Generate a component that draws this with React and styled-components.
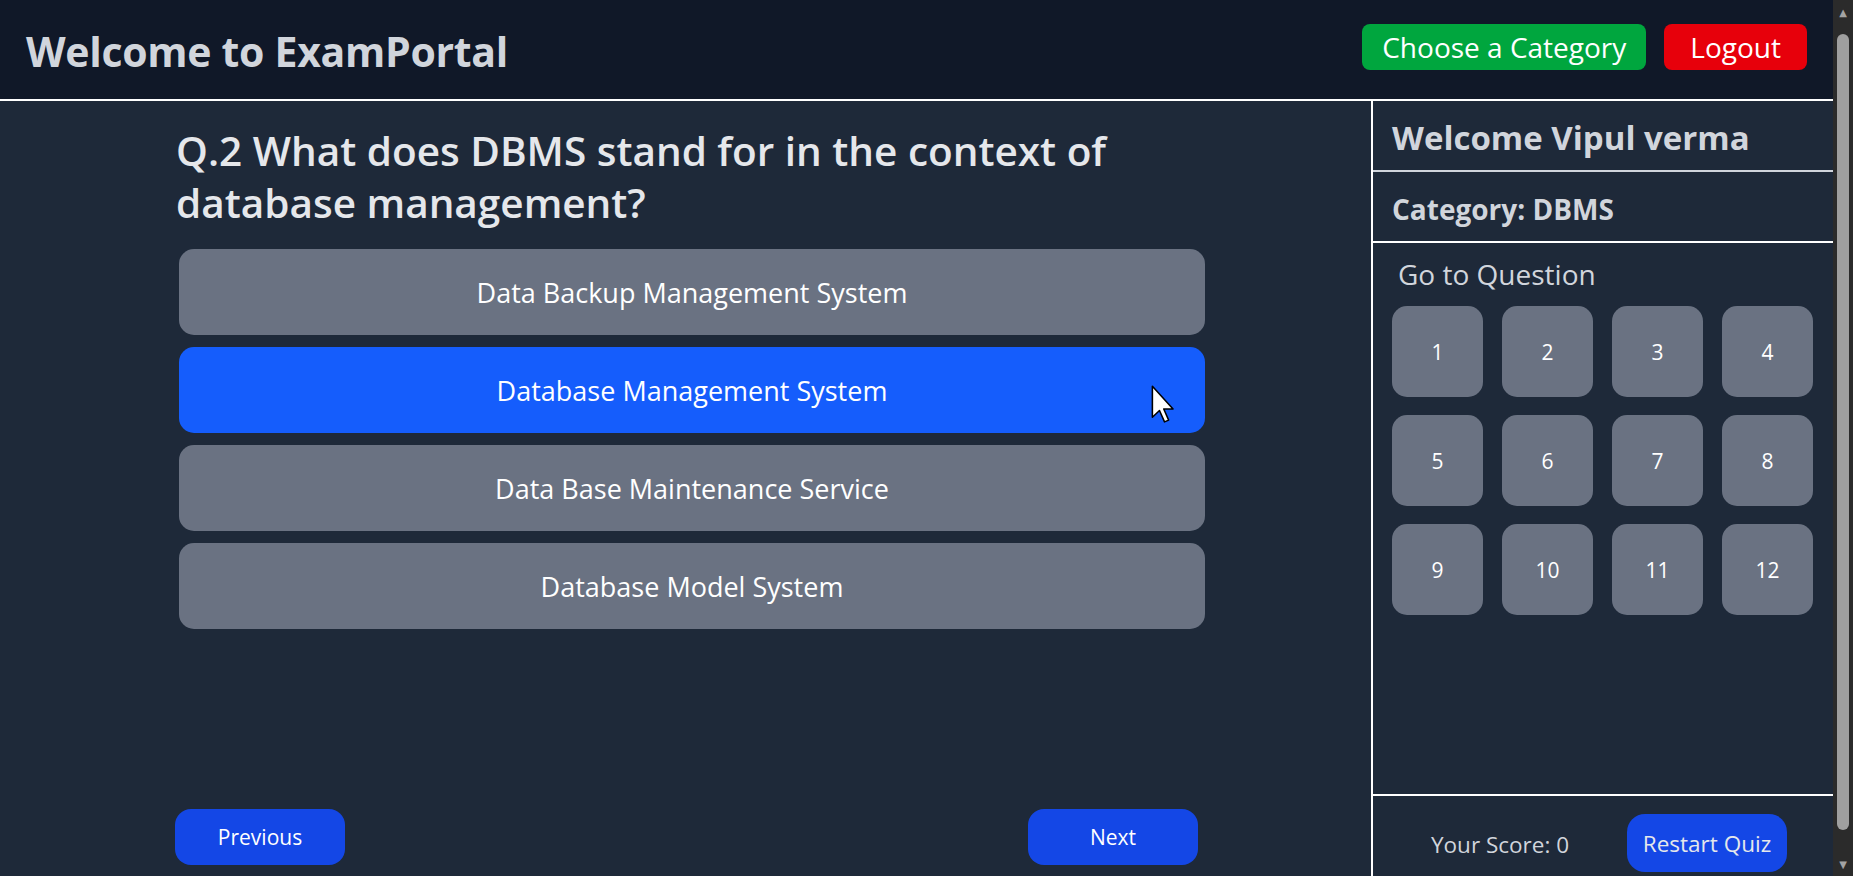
import React, { useState } from "react";
import styled, { createGlobalStyle } from "styled-components";

const GlobalStyle = createGlobalStyle`
  body {
    margin: 0;
    background: #1e2939;
    font-family: "Open Sans", "Noto Sans", sans-serif;
    color: #d1d5dc;
  }
  * {
    box-sizing: border-box;
  }
`;

const options = [
  "Data Backup Management System",
  "Database Management System",
  "Data Base Maintenance Service",
  "Database Model System",
];

const Cursor = () => (
  <CursorMark width="26" height="40" viewBox="0 0 20 31">
    <path
      d="M1 1 L1 25 L6.5 19.8 L10.4 28.6 L13.6 27.2 L9.8 18.6 L17 18.6 Z"
      fill="#fff"
      stroke="#000"
      strokeWidth="1.2"
      strokeLinejoin="round"
    />
  </CursorMark>
);

const App = () => {
  const [selected, setSelected] = useState(1);

  return (
    <Page>
      <GlobalStyle />
      <Header>
        <Brand>Welcome to ExamPortal</Brand>
        <HeaderActions>
          <HeaderButton $bg="#00a63e" $padX={20}>
            Choose a Category
          </HeaderButton>
          <HeaderButton $bg="#e7000b" $padX={26}>
            Logout
          </HeaderButton>
        </HeaderActions>
      </Header>

      <Main>
        <QuizArea>
          <QuizInner>
            <Question>
              Q.2 What does DBMS stand for in the context of database
              management?
            </Question>
            <OptionList>
              {options.map((opt, i) => (
                <Option
                  key={opt}
                  $active={i === selected}
                  onClick={() => setSelected(i)}
                >
                  {opt}
                  {i === selected && <Cursor />}
                </Option>
              ))}
            </OptionList>
            <NavRow>
              <NavButton>Previous</NavButton>
              <NavButton>Next</NavButton>
            </NavRow>
          </QuizInner>
        </QuizArea>

        <Sidebar>
          <SideBlock $line="#d1d5dc" $top={3}>
            <UserName>Welcome Vipul verma</UserName>
          </SideBlock>
          <SideBlock $line="#ffffff" $top={5}>
            <CategoryLabel>Category: DBMS</CategoryLabel>
          </SideBlock>
          <Navigator>
            <NavigatorTitle>Go to Question</NavigatorTitle>
            <QuestionGrid>
              {Array.from({ length: 12 }, (_, i) => (
                <QuestionTile key={i}>{i + 1}</QuestionTile>
              ))}
            </QuestionGrid>
          </Navigator>
          <ScoreBar>
            <Score>Your Score: 0</Score>
            <RestartButton>Restart Quiz</RestartButton>
          </ScoreBar>
        </Sidebar>
      </Main>

      <ScrollTrack>
        <ScrollArrow>▲</ScrollArrow>
        <ScrollThumb />
        <ScrollArrow>▼</ScrollArrow>
      </ScrollTrack>
    </Page>
  );
};

export default App;

// Styled Components
const Page = styled.div`
  margin-right: 20px;
`;

const Header = styled.header`
  display: flex;
  align-items: center;
  justify-content: space-between;
  height: 101px;
  padding: 2px 26px 0 26px;
  background: #101828;
  border-bottom: 2px solid #ffffff;
`;

const Brand = styled.h1`
  margin: 0;
  font-size: 41px;
  font-weight: 700;
  color: #d1d5dc;
  letter-spacing: -0.3px;
`;

const HeaderActions = styled.div`
  display: flex;
  gap: 18px;
  margin-top: -7px;
`;

const HeaderButton = styled.button`
  height: 46px;
  padding: 0 ${(p) => p.$padX}px;
  border: none;
  border-radius: 8px;
  background: ${(p) => p.$bg};
  color: #ffffff;
  font-family: inherit;
  font-size: 28px;
  cursor: pointer;
`;

const Main = styled.main`
  display: flex;
  height: 792px;
`;

const QuizArea = styled.section`
  flex: 1;
  display: flex;
  padding: 24px 0 28px 175px;
`;

const QuizInner = styled.div`
  width: 1030px;
  display: flex;
  flex-direction: column;
`;

const Question = styled.h2`
  margin: 0 0 20px 1px;
  font-size: 40.5px;
  line-height: 52px;
  font-weight: 600;
  color: #e5e7eb;
`;

const OptionList = styled.div`
  display: flex;
  flex-direction: column;
  gap: 12px;
  padding-left: 4px;
`;

const Option = styled.button`
  position: relative;
  height: 86px;
  border: none;
  border-radius: 15px;
  background: ${(p) => (p.$active ? "#155dfc" : "#6a7282")};
  color: #ffffff;
  font-family: inherit;
  font-size: 27px;
  cursor: pointer;
`;

const CursorMark = styled.svg`
  position: absolute;
  top: 38px;
  right: 28px;
`;

const NavRow = styled.div`
  display: flex;
  justify-content: space-between;
  margin-top: auto;
  padding-right: 7px;
`;

const NavButton = styled.button`
  width: 170px;
  height: 56px;
  border: none;
  border-radius: 16px;
  background: #1447e6;
  color: #ffffff;
  font-family: inherit;
  font-size: 21px;
  cursor: pointer;
`;

const Sidebar = styled.aside`
  width: 462px;
  flex-shrink: 0;
  display: flex;
  flex-direction: column;
  border-left: 2px solid #ffffff;
`;

const SideBlock = styled.div`
  display: flex;
  align-items: center;
  height: 71px;
  padding: ${(p) => p.$top}px 19px 0 19px;
  border-bottom: 2px solid ${(p) => p.$line};
`;

const UserName = styled.h2`
  margin: 0;
  font-size: 33px;
  font-weight: 700;
  color: #d1d5dc;
`;

const CategoryLabel = styled.h3`
  margin: 0;
  font-size: 28px;
  font-weight: 700;
  color: #d1d5dc;
`;

const Navigator = styled.div`
  flex: 1;
  padding: 13px 19px 0 19px;
`;

const NavigatorTitle = styled.h3`
  margin: 0 0 14px 6px;
  font-size: 28px;
  line-height: 36px;
  font-weight: 400;
  color: #d1d5dc;
`;

const QuestionGrid = styled.div`
  display: grid;
  grid-template-columns: repeat(4, 91px);
  column-gap: 19px;
  row-gap: 18px;
`;

const QuestionTile = styled.button`
  height: 91px;
  border: none;
  border-radius: 15px;
  background: #6a7282;
  color: #ffffff;
  font-family: inherit;
  font-size: 21px;
  cursor: pointer;
`;

const ScoreBar = styled.div`
  display: flex;
  align-items: center;
  justify-content: space-around;
  padding: 18px 17px 21px 29px;
  border-top: 2px solid #ffffff;
`;

const Score = styled.span`
  font-size: 22.5px;
  color: #d1d5dc;
  margin-top: 2px;
`;

const RestartButton = styled.button`
  width: 160px;
  height: 58px;
  border: none;
  border-radius: 18px;
  background: #1447e6;
  color: #e5e7eb;
  font-family: inherit;
  font-size: 22.5px;
  cursor: pointer;
`;

const ScrollTrack = styled.div`
  position: fixed;
  top: 0;
  right: 0;
  bottom: 0;
  width: 20px;
  display: flex;
  flex-direction: column;
  align-items: center;
  background: #2b2b2b;
`;

const ScrollArrow = styled.span`
  height: 24px;
  display: flex;
  align-items: center;
  justify-content: center;
  font-size: 10px;
  color: #a3a3a3;
  font-family: "DejaVu Sans", sans-serif;
`;

const ScrollThumb = styled.div`
  flex: 1;
  width: 12px;
  margin: 10px 0 22px 0;
  border-radius: 6px;
  background: #9f9f9f;
`;
